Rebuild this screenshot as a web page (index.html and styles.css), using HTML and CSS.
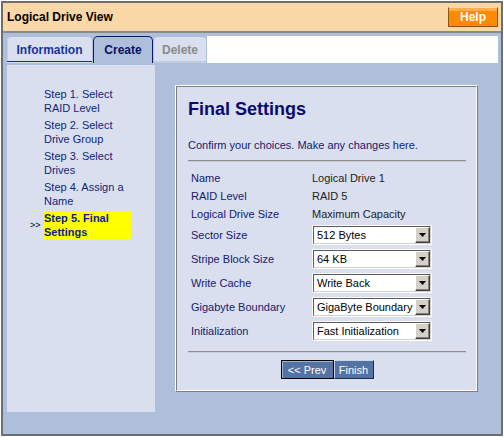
FILE: index.html
```html
<!DOCTYPE html>
<html>
<head>
<meta charset="utf-8">
<link rel="stylesheet" href="styles.css">
</head>
<body>
<div class="frame">
  <div class="header">
    <span class="title">Logical Drive View</span>
    <span class="help">Help</span>
  </div>
  <div class="body">
    <div class="tabs">
      <div class="tab tab-info">Information</div>
      <div class="tab tab-create">Create</div>
      <div class="tab tab-delete">Delete</div>
      <div class="tab-fill"></div>
    </div>
    <div class="content">
      <div class="steps">
        <div class="step"><span class="marker"></span><span class="step-text">Step 1. Select RAID Level</span></div>
        <div class="step"><span class="marker"></span><span class="step-text">Step 2. Select Drive Group</span></div>
        <div class="step"><span class="marker"></span><span class="step-text">Step 3. Select Drives</span></div>
        <div class="step"><span class="marker"></span><span class="step-text">Step 4. Assign a Name</span></div>
        <div class="step current"><span class="marker">&gt;&gt;</span><span class="step-text">Step 5. Final Settings</span></div>
      </div>
      <div class="panel">
        <div class="panel-inner">
          <div class="panel-title">Final Settings</div>
          <div class="intro">Confirm your choices. Make any changes here.</div>
          <div class="rule"></div>
          <div class="fields">
            <div class="row"><span class="label">Name</span><span class="value">Logical Drive 1</span></div>
            <div class="row"><span class="label">RAID Level</span><span class="value">RAID 5</span></div>
            <div class="row"><span class="label">Logical Drive Size</span><span class="value">Maximum Capacity</span></div>
            <div class="row sel"><span class="label">Sector Size</span><span class="select"><span class="select-in"><span class="select-val">512 Bytes</span><span class="arrow"><svg width="7" height="4" viewBox="0 0 7 4"><path d="M0 0H7L3.5 4Z" fill="#000"/></svg></span></span></span></div>
            <div class="row sel"><span class="label">Stripe Block Size</span><span class="select"><span class="select-in"><span class="select-val">64 KB</span><span class="arrow"><svg width="7" height="4" viewBox="0 0 7 4"><path d="M0 0H7L3.5 4Z" fill="#000"/></svg></span></span></span></div>
            <div class="row sel"><span class="label">Write Cache</span><span class="select"><span class="select-in"><span class="select-val">Write Back</span><span class="arrow"><svg width="7" height="4" viewBox="0 0 7 4"><path d="M0 0H7L3.5 4Z" fill="#000"/></svg></span></span></span></div>
            <div class="row sel"><span class="label">Gigabyte Boundary</span><span class="select"><span class="select-in"><span class="select-val">GigaByte Boundary</span><span class="arrow"><svg width="7" height="4" viewBox="0 0 7 4"><path d="M0 0H7L3.5 4Z" fill="#000"/></svg></span></span></span></div>
            <div class="row sel"><span class="label">Initialization</span><span class="select"><span class="select-in"><span class="select-val">Fast Initialization</span><span class="arrow"><svg width="7" height="4" viewBox="0 0 7 4"><path d="M0 0H7L3.5 4Z" fill="#000"/></svg></span></span></span></div>
          </div>
          <div class="rule rule2"></div>
          <div class="buttons">
            <span class="btn btn-prev">&lt;&lt; Prev</span><span class="btn btn-finish">Finish</span>
          </div>
        </div>
      </div>
    </div>
  </div>
</div>
</body>
</html>
```
FILE: styles.css
```css
* { box-sizing: border-box; }
body {
  margin: 0;
  font-family: "Liberation Sans", Arial, sans-serif;
  background: #fff;
}
.frame {
  margin: 1px;
  width: 502px;
  height: 435px;
  border: 2px solid #6e6e6e;
  display: flex;
  flex-direction: column;
}
.header {
  height: 30px;
  flex: none;
  background: #f9d7a6;
  border-bottom: 2px solid #8a8a8a;
  display: flex;
  align-items: center;
  justify-content: space-between;
  padding: 0 3px 0 4px;
}
.title {
  font-size: 12px;
  font-weight: bold;
  color: #000;
}
.help {
  width: 50px;
  height: 20px;
  display: flex;
  align-items: center;
  justify-content: center;
  background: #ff8a00;
  border: 1px solid;
  border-color: #ffd9a0 #8a5418 #8a5418 #8a5418;
  box-shadow: inset 0 3px 0 #ffae4a;
  color: #fff;
  font-size: 12px;
  font-weight: bold;
}
.body {
  flex: 1;
  background: #adbfdb;
  padding: 3px 3px 0 4px;
}
.tabs {
  display: flex;
  height: 27px;
  gap: 1px;
  align-items: flex-start;
}
.tab {
  display: flex;
  align-items: center;
  justify-content: center;
  font-size: 12px;
  font-weight: bold;
}
.tab-info {
  width: 85px;
  height: 26px;
  margin-top: 1px;
  background: #d9dfef;
  border-radius: 4px 4px 0 0;
  color: #15349a;
  box-shadow: inset 0 -1px 0 #d9dfef, inset 0 -2px 0 #1a2a80, inset 1px 0 0 #c4cde4;
}
.tab-create {
  width: 60px;
  height: 27px;
  background: #adbfdb;
  border: 1px solid #10186e;
  border-bottom: none;
  border-radius: 5px 5px 0 0;
  color: #0a0f66;
}
.tab-delete {
  width: 52px;
  height: 26px;
  margin-top: 1px;
  background: #d9dfef;
  border-radius: 4px 4px 0 0;
  color: #8a8a8a;
  box-shadow: inset 0 -2px 0 #c2cbe2;
}
.tab-fill {
  flex: 1;
  height: 27px;
  background: #fff;
}
.content {
  display: flex;
  align-items: flex-start;
  margin-top: 2px;
}
.steps {
  width: 148px;
  height: 347px;
  background: #d9dfef;
  padding: 22px 0 0 23px;
  font-size: 11px;
  line-height: 14px;
  color: #0f1f78;
}
.step {
  display: flex;
  align-items: center;
  margin-bottom: 3px;
}
.marker {
  width: 14px;
  font-size: 9px;
  color: #000;
}
.step-text {
  width: 87px;
}
.current .step-text {
  background: #ffff00;
  font-weight: bold;
  color: #0a1a90;
}
.panel {
  margin: 20px 0 0 20px;
  width: 303px;
  height: 307px;
  border: 1px solid;
  border-color: #ffffff #7c7c7c #7c7c7c #ffffff;
}
.panel-inner {
  height: 100%;
  background: #d9dfef;
  border: 1px solid;
  border-color: #7c7c7c #ffffff #ffffff #7c7c7c;
  padding: 12px 10px 0 11px;
}
.panel-title {
  font-size: 18px;
  line-height: 20px;
  font-weight: bold;
  color: #0a0a6e;
}
.intro {
  margin-top: 19px;
  font-size: 11px;
  line-height: 14px;
  color: #15206e;
}
.rule {
  margin-top: 8px;
  height: 2px;
  border-top: 1px solid #8e8e8e;
  border-bottom: 1px solid #c9ccd4;
}
.fields {
  margin-top: 7px;
}
.row {
  display: flex;
  align-items: center;
  height: 18px;
  font-size: 11px;
}
.row.sel {
  height: 24px;
}
.label {
  width: 124px;
  padding-left: 3px;
  color: #15206e;
}
.value {
  color: #222;
}
.select {
  width: 120px;
  height: 20px;
  border: 1px solid #fff;
  background: #fff;
}
.select-in {
  display: flex;
  align-items: center;
  height: 100%;
  border: 1px solid;
  border-color: #5a5a5a #d4d0c8 #d4d0c8 #5a5a5a;
}
.select-val {
  flex: 1;
  padding-left: 3px;
  color: #000;
  white-space: nowrap;
  overflow: hidden;
}
.arrow {
  width: 15px;
  height: 16px;
  flex: none;
  display: flex;
  align-items: center;
  justify-content: center;
  background: #d4d0c8;
  border: 1px solid;
  border-color: #ffffff #404040 #404040 #ffffff;
  box-shadow: inset -1px -1px 0 #808080;
}
.rule2 {
  margin-top: 8px;
}
.buttons {
  margin-top: 7px;
  display: flex;
  justify-content: center;
}
.btn {
  height: 19px;
  display: flex;
  align-items: center;
  justify-content: center;
  background: #5472a2;
  color: #fff;
  font-size: 11px;
}
.btn-prev {
  width: 53px;
  border: 1px solid #000;
  box-shadow: inset 1px 1px 0 #9fb2d2;
}
.btn-finish {
  width: 40px;
  border: 1px solid;
  border-color: #c8d4e8 #1a2a50 #1a2a50 #c8d4e8;
}
```
